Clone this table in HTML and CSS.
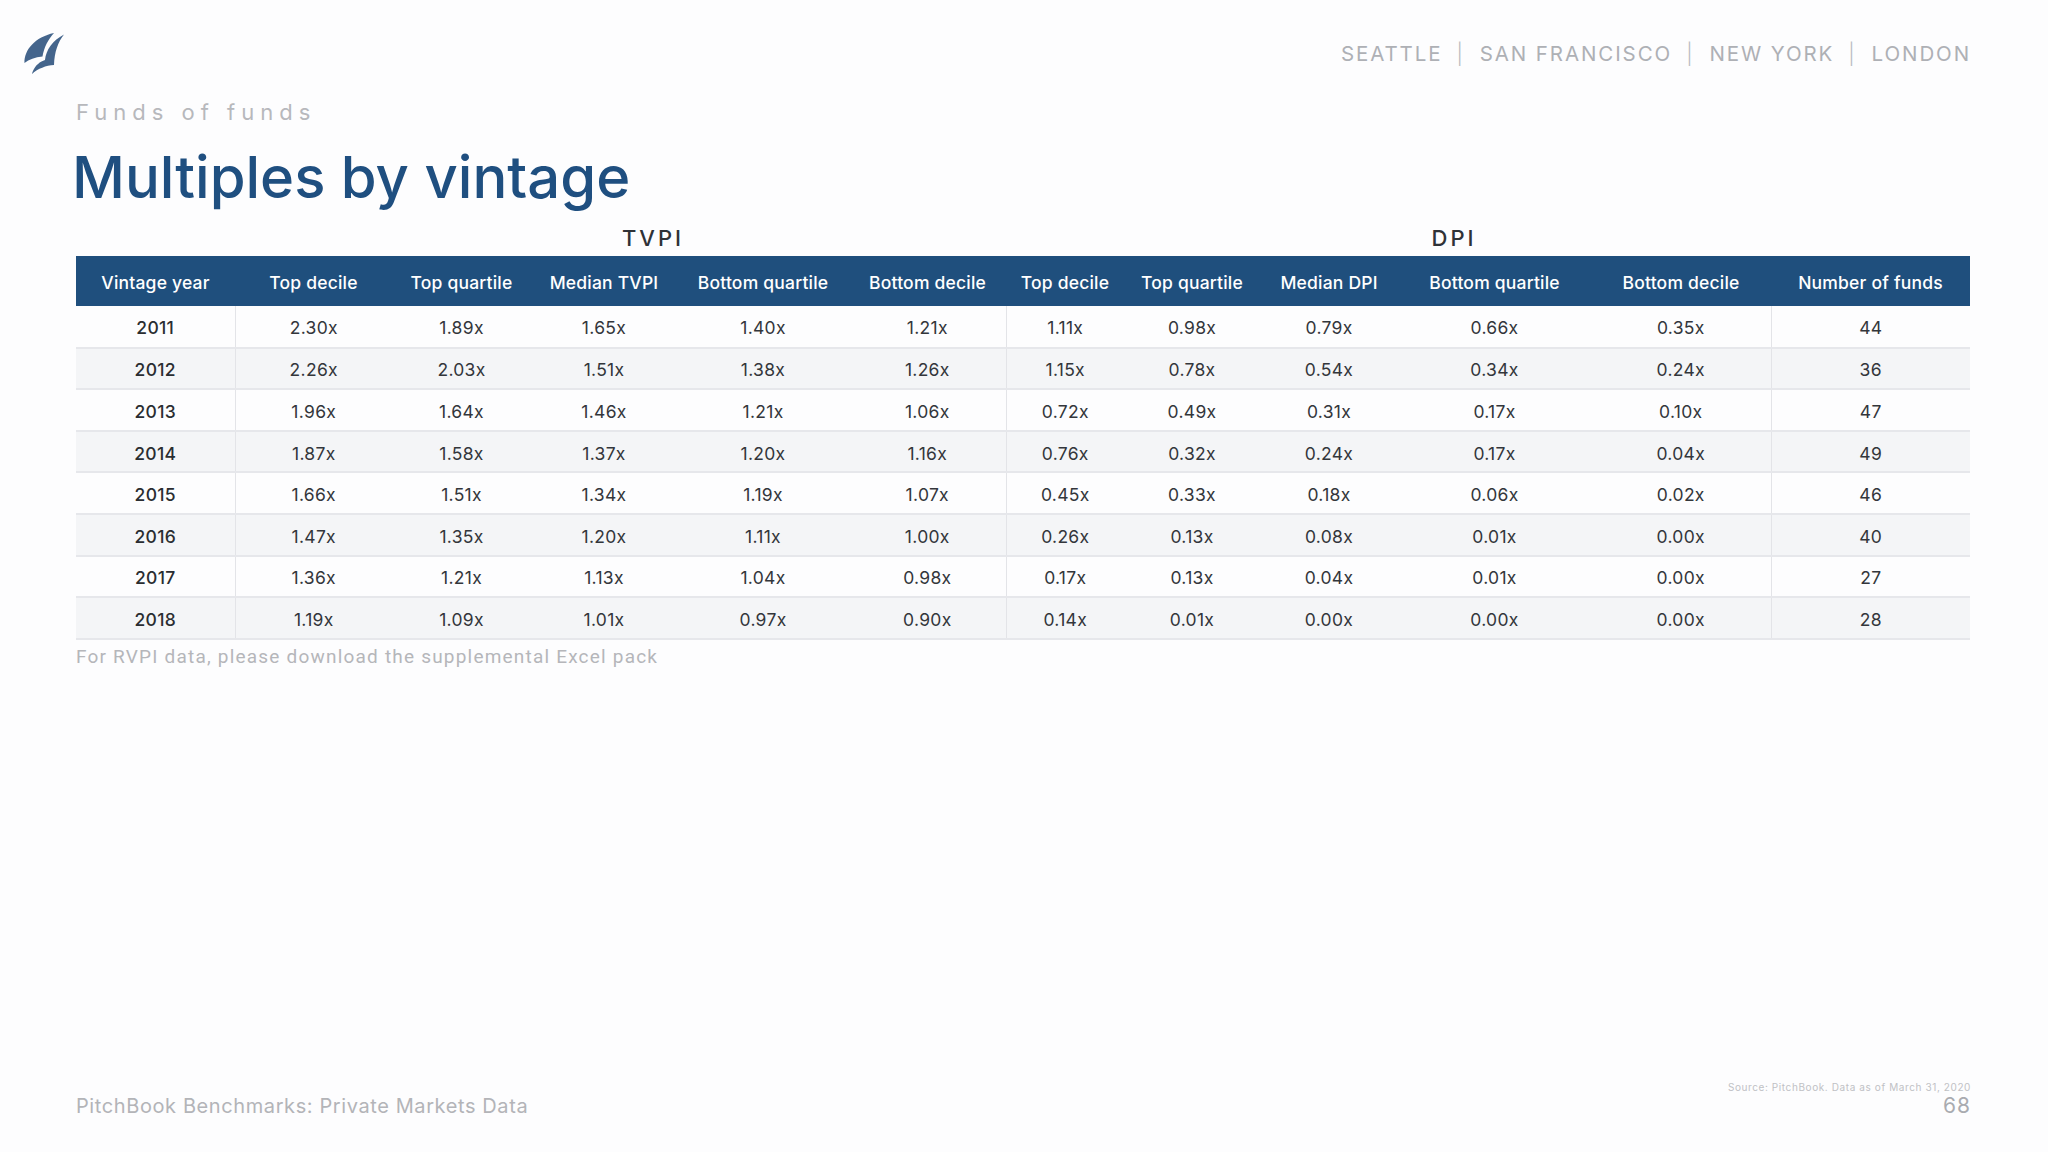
FILE: index.html
```html
<!DOCTYPE html>
<html lang="en">
<head>
<meta charset="utf-8">
<title>Multiples by vintage</title>
<link rel="stylesheet" href="styles.css">
</head>
<body>
<div class="page">
  <header class="top">
    <svg class="logo" viewBox="20 30 48 46" width="48" height="46" aria-label="PitchBook">
      <path d="M24.5,62 C24,49 35,36 54,32 C48,38.5 44,46.5 42.5,55.5 C35,56 29,58.5 24.5,62 Z" fill="#44658c"/>
      <path d="M64,33.5 C58,41 54.5,51 54,64 C46,64.5 38,67.5 32,73 C33,68.5 36.5,63 41.5,60.5 L45,59 C46,49 52.5,39.5 64,33.5 Z" fill="#44658c"/>
    </svg>
    <nav class="cities">
      <span>SEATTLE</span><span class="sep">|</span><span>SAN FRANCISCO</span><span class="sep">|</span><span>NEW YORK</span><span class="sep">|</span><span>LONDON</span>
    </nav>
  </header>

  <main class="content">
    <p class="kicker">Funds of funds</p>
    <h1 class="title">Multiples by vintage</h1>

    <div class="groups">
      <span class="group">TVPI</span>
      <span class="group">DPI</span>
    </div>

    <table class="data">
      <colgroup>
        <col class="c-year"><col class="c1"><col class="c2"><col class="c3"><col class="c4"><col class="c5">
        <col class="c6"><col class="c7"><col class="c8"><col class="c9"><col class="c10"><col class="c11">
      </colgroup>
      <thead>
        <tr>
          <th>Vintage year</th><th>Top decile</th><th>Top quartile</th><th>Median TVPI</th><th>Bottom quartile</th><th>Bottom decile</th>
          <th>Top decile</th><th>Top quartile</th><th>Median DPI</th><th>Bottom quartile</th><th>Bottom decile</th><th>Number of funds</th>
        </tr>
      </thead>
      <tbody>
        <tr><td class="yr">2011</td><td>2.30x</td><td>1.89x</td><td>1.65x</td><td>1.40x</td><td class="end">1.21x</td><td>1.11x</td><td>0.98x</td><td>0.79x</td><td>0.66x</td><td class="end">0.35x</td><td>44</td></tr>
        <tr><td class="yr">2012</td><td>2.26x</td><td>2.03x</td><td>1.51x</td><td>1.38x</td><td class="end">1.26x</td><td>1.15x</td><td>0.78x</td><td>0.54x</td><td>0.34x</td><td class="end">0.24x</td><td>36</td></tr>
        <tr><td class="yr">2013</td><td>1.96x</td><td>1.64x</td><td>1.46x</td><td>1.21x</td><td class="end">1.06x</td><td>0.72x</td><td>0.49x</td><td>0.31x</td><td>0.17x</td><td class="end">0.10x</td><td>47</td></tr>
        <tr><td class="yr">2014</td><td>1.87x</td><td>1.58x</td><td>1.37x</td><td>1.20x</td><td class="end">1.16x</td><td>0.76x</td><td>0.32x</td><td>0.24x</td><td>0.17x</td><td class="end">0.04x</td><td>49</td></tr>
        <tr><td class="yr">2015</td><td>1.66x</td><td>1.51x</td><td>1.34x</td><td>1.19x</td><td class="end">1.07x</td><td>0.45x</td><td>0.33x</td><td>0.18x</td><td>0.06x</td><td class="end">0.02x</td><td>46</td></tr>
        <tr><td class="yr">2016</td><td>1.47x</td><td>1.35x</td><td>1.20x</td><td>1.11x</td><td class="end">1.00x</td><td>0.26x</td><td>0.13x</td><td>0.08x</td><td>0.01x</td><td class="end">0.00x</td><td>40</td></tr>
        <tr><td class="yr">2017</td><td>1.36x</td><td>1.21x</td><td>1.13x</td><td>1.04x</td><td class="end">0.98x</td><td>0.17x</td><td>0.13x</td><td>0.04x</td><td>0.01x</td><td class="end">0.00x</td><td>27</td></tr>
        <tr><td class="yr">2018</td><td>1.19x</td><td>1.09x</td><td>1.01x</td><td>0.97x</td><td class="end">0.90x</td><td>0.14x</td><td>0.01x</td><td>0.00x</td><td>0.00x</td><td class="end">0.00x</td><td>28</td></tr>
      </tbody>
    </table>

    <p class="note">For RVPI data, please download the supplemental Excel pack</p>
  </main>

  <footer class="foot">
    <span class="brand">PitchBook Benchmarks: Private Markets Data</span>
    <div class="foot-right">
      <span class="source">Source: PitchBook. Data as of March 31, 2020</span>
      <span class="pageno">68</span>
    </div>
  </footer>
</div>
</body>
</html>
```

FILE: styles.css
```css
html, body {
  margin: 0;
  padding: 0;
  background: #fdfdfe;
}

.page {
  width: 2048px;
  height: 1152px;
  box-sizing: border-box;
  display: flex;
  flex-direction: column;
  font-family: "Inter", "Noto Sans", sans-serif;
  color: #2f3237;
  padding-bottom: 34px;
}

/* top bar */
.top {
  display: flex;
  justify-content: space-between;
  align-items: flex-start;
  padding: 31px 77px 0 20px;
  height: 42px;
}

.logo {
  display: block;
}

.cities {
  margin-top: 11px;
  font-size: 20.5px;
  line-height: 24px;
  letter-spacing: 1.9px;
  color: #aeb0b5;
  display: flex;
  white-space: nowrap;
}

.cities .sep {
  margin: 0 15px 0 14px;
  font-weight: 300;
  color: #b9bbc0;
}

/* content */
.content {
  padding: 0 78px 0 76px;
  display: flex;
  flex-direction: column;
}

.kicker {
  margin: 26px 0 0;
  font-size: 22px;
  line-height: 26px;
  letter-spacing: 6px;
  color: #b7b8bc;
}

.title {
  margin: 20px 0 0 -4px;
  font-size: 58px;
  line-height: 64px;
  font-weight: 500;
  color: #1f4f80;
  letter-spacing: 0;
}

.groups {
  margin-top: 16px;
  display: grid;
  grid-template-columns: 1154px 448px;
  font-size: 22px;
  line-height: 26px;
  font-weight: 500;
  letter-spacing: 3px;
  color: #2f3237;
  text-align: center;
}

.data {
  margin-top: 5px;
  width: 1894px;
  table-layout: fixed;
  border-collapse: collapse;
  font-size: 17.5px;
  letter-spacing: 0.3px;
}

.c-year { width: 159px; }
.c1 { width: 157px; }
.c2 { width: 139px; }
.c3 { width: 146px; }
.c4 { width: 172px; }
.c5 { width: 157px; }
.c6 { width: 118px; }
.c7 { width: 136px; }
.c8 { width: 138px; }
.c9 { width: 193px; }
.c10 { width: 180px; }
.c11 { width: 199px; }

.data th {
  height: 50px;
  padding: 2px 0 0;
  box-sizing: border-box;
  background: #1f4f7d;
  color: #ffffff;
  font-weight: 500;
  font-size: 17.5px;
  letter-spacing: 0.2px;
  text-align: center;
  white-space: nowrap;
}

.data td {
  height: 41.6px;
  box-sizing: border-box;
  padding: 3px 0 0;
  text-align: center;
  color: #33363b;
  border-bottom: 2px solid #e6e7eb;
}

.data tbody tr:nth-child(even) td {
  background: #f4f5f7;
}

.data td.yr {
  font-weight: 500;
  color: #2a2d31;
  border-right: 1px solid #e3e4e8;
}

.data td.end {
  border-right: 1px solid #e3e4e8;
}

.note {
  margin: 6px 0 0;
  font-family: "Roboto", "Liberation Sans", sans-serif;
  font-size: 19px;
  line-height: 22px;
  letter-spacing: 1.2px;
  color: #b5b6ba;
}

/* footer */
.foot {
  margin-top: auto;
  padding: 0 77px 0 76px;
  display: flex;
  justify-content: space-between;
  align-items: flex-end;
}

.brand {
  font-size: 20px;
  line-height: 24px;
  letter-spacing: 0.6px;
  color: #b3b4b8;
}

.foot-right {
  display: flex;
  flex-direction: column;
  align-items: flex-end;
}

.source {
  font-size: 10px;
  line-height: 12px;
  letter-spacing: 0.6px;
  color: #c0c1c5;
  margin-bottom: 1px;
}

.pageno {
  font-size: 21px;
  line-height: 24px;
  letter-spacing: 1px;
  color: #a9abb0;
}
```
